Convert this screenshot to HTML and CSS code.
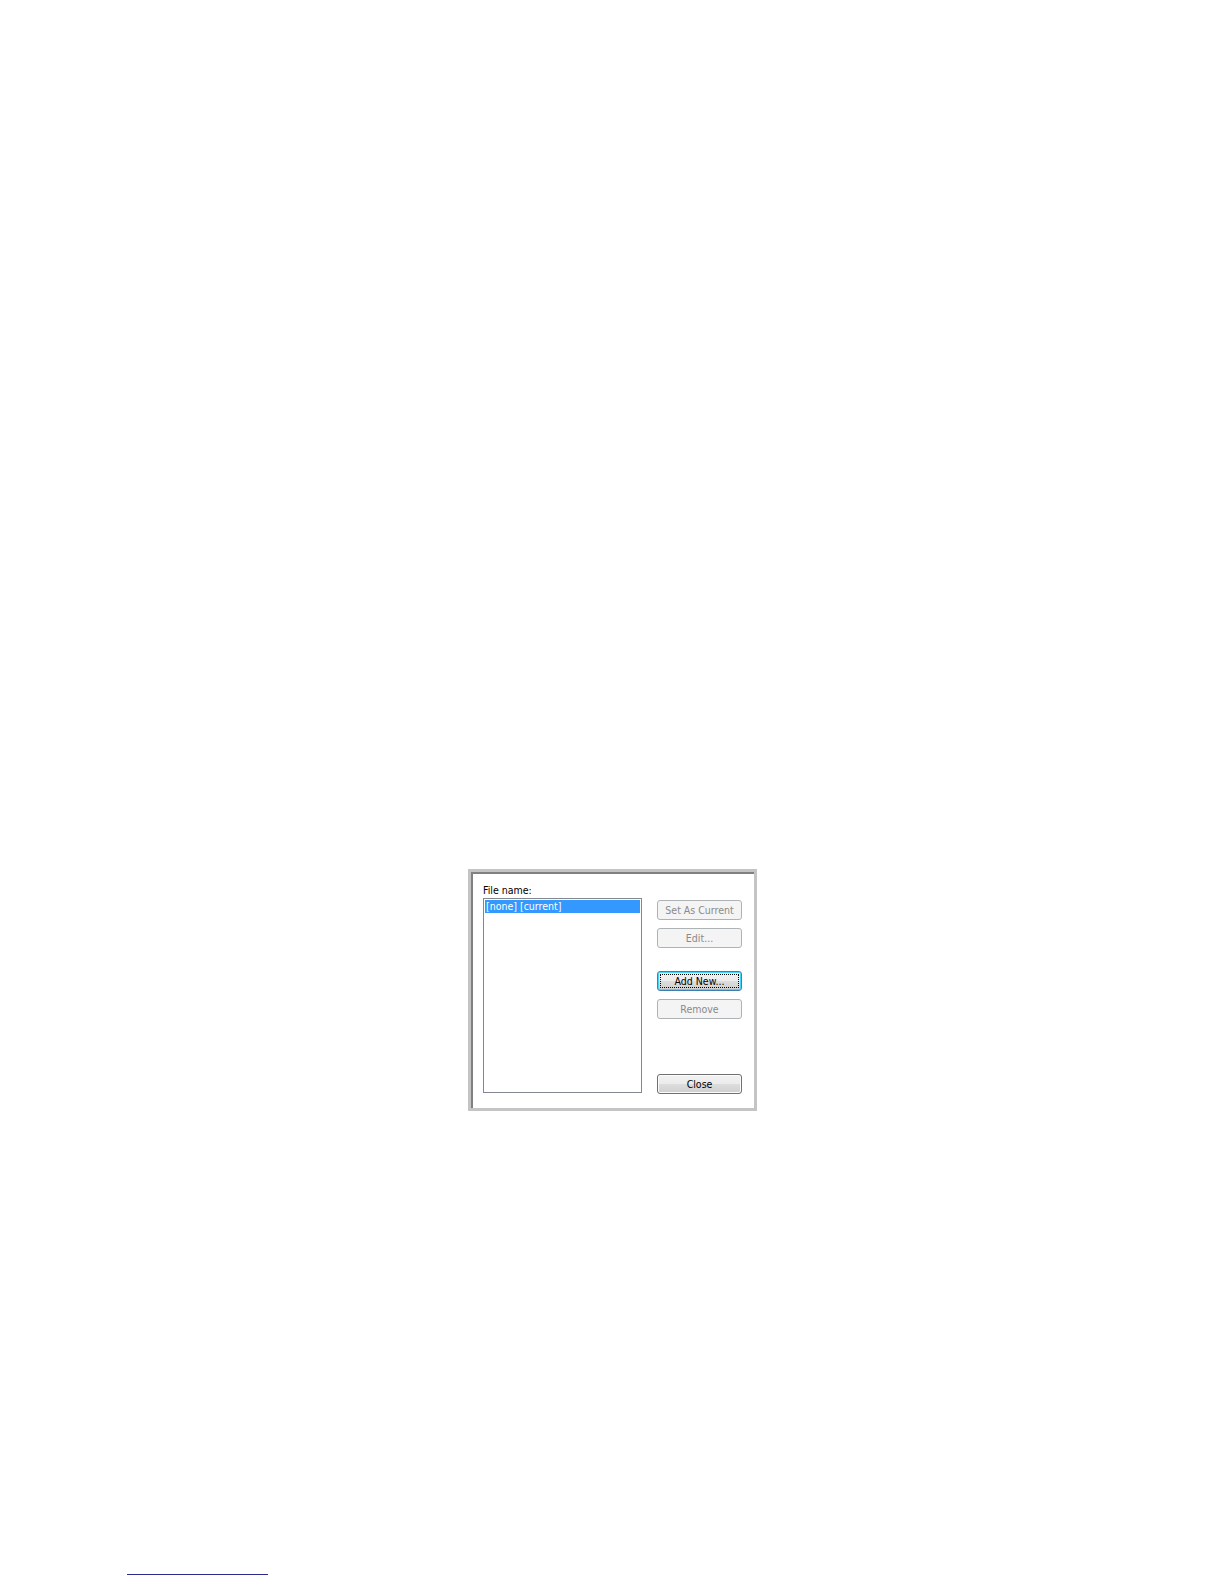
FILE: index.html
```html
<!DOCTYPE html>
<html>
<head>
<meta charset="utf-8">
<title>File name dialog</title>
<link rel="stylesheet" href="styles.css">
</head>
<body>
<div class="page">
  <div class="frame">
    <div class="inner">
      <div class="left-col">
        <div class="label">File name:</div>
        <div class="listbox">
          <div class="item selected">[none] [current]</div>
        </div>
      </div>
      <div class="buttons">
        <div class="btn disabled">Set As Current</div>
        <div class="btn disabled gap-s">Edit...</div>
        <div class="btn focused gap-l">Add New...</div>
        <div class="btn disabled gap-s">Remove</div>
        <div class="spacer"></div>
        <div class="btn normal">Close</div>
      </div>
    </div>
  </div>
  <div class="footnote-rule"></div>
</div>
</body>
</html>
```

FILE: styles.css
```css
html, body {
  margin: 0;
  padding: 0;
  background: #ffffff;
}
body {
  font-family: "DejaVu Sans Condensed", "Liberation Sans", Arial, sans-serif;
  font-size: 10.5px;
  color: #000;
}
.page {
  display: flex;
  flex-direction: column;
  align-items: flex-start;
  padding-top: 869px;
}
.frame {
  margin-left: 468px;
  width: 289px;
  height: 242px;
  box-sizing: border-box;
  border: 3px solid #c4c4c4;
  background: #fff;
}
.inner {
  height: 100%;
  box-sizing: border-box;
  border-top: 2px solid #808080;
  border-left: 2px solid #808080;
  display: flex;
  padding: 10px 0 0 10px;
}
.left-col {
  display: flex;
  flex-direction: column;
}
.label {
  height: 14px;
  line-height: 13px;
}
.listbox {
  width: 159px;
  height: 195px;
  box-sizing: border-box;
  border: 1px solid #828790;
  padding: 1px;
}
.item {
  height: 13px;
  line-height: 13px;
  padding-left: 1px;
  white-space: nowrap;
}
.item.selected {
  background: #3399ff;
  color: #fff;
}
.buttons {
  display: flex;
  flex-direction: column;
  margin-left: 15px;
  padding-top: 16px;
  height: 210px;
  box-sizing: border-box;
}
.btn {
  position: relative;
  width: 85px;
  height: 20px;
  box-sizing: border-box;
  border-radius: 3px;
  line-height: 19px;
  text-align: center;
  white-space: nowrap;
}
.gap-s { margin-top: 8px; }
.gap-l { margin-top: 23px; }
.spacer { flex: 1; }
.btn.disabled {
  border: 1px solid #adb2b5;
  background: #f4f4f4;
  color: #8a8a8a;
}
.btn.normal {
  border: 1px solid #707070;
  background: linear-gradient(to bottom, #f2f2f2 0%, #ebebeb 50%, #dddddd 51%, #cfcfcf 100%);
  box-shadow: inset 0 0 0 1px #fcfcfc;
}
.btn.focused {
  border: 1px solid #3c7fb1;
  background: linear-gradient(to bottom, #f2f2f2 0%, #ebebeb 50%, #dddddd 51%, #cfcfcf 100%);
  box-shadow: inset 0 0 0 1px #48d5fc;
}
.btn.focused::after {
  content: "";
  position: absolute;
  left: 2px;
  top: 2px;
  right: 2px;
  bottom: 2px;
  border: 1px dotted #000;
}
.footnote-rule {
  margin-left: 127px;
  margin-top: 463px;
  width: 141px;
  height: 1px;
  background: #2b2b8c;
}
```
